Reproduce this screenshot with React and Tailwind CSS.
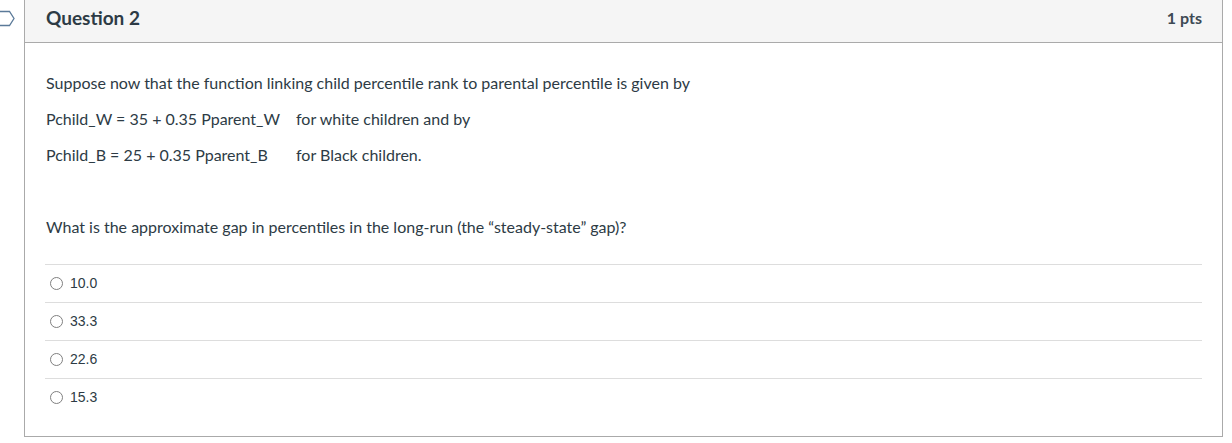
const answers = ["10.0", "33.3", "22.6", "15.3"];

function Marker() {
  return (
    <svg className="absolute left-0 top-[10px]" width="16" height="17" viewBox="0 0 16 17">
      <path d="M-4 1.5 H9.5 L14 8.5 L9.5 15.5 H-4" fill="none" stroke="#5b7a99" strokeWidth="1.3" />
    </svg>
  );
}

export default function App() {
  return (
    <div className="relative w-[1232px] h-[443px] bg-white overflow-hidden font-['Lato','Noto_Sans',sans-serif] text-[#2d3b45]">
      <Marker />
      <div className="ml-[24px] mt-[-1px] w-[1199px] border border-[#aaaaaa]">
        <div className="h-[43px] bg-[#f5f5f5] border-b border-[#aaaaaa] flex items-center justify-between pl-[21px] pr-[20px] pb-[6px]">
          <span className="text-[19px] font-bold">Question 2</span>
          <span className="text-[16px] font-bold text-[#3d4a54]">1 pts</span>
        </div>
        <div className="px-[20px] pt-[29px] pb-[20px]">
          <div className="text-[16px] leading-[22px] pl-[1px]">
            <p className="mb-[14px]">
              Suppose now that the function linking child percentile rank to parental percentile is given by
            </p>
            <p className="mb-[14px] flex">
              <span className="w-[250px]">Pchild_W = 35 + 0.35 Pparent_W</span>
              <span>for white children and by</span>
            </p>
            <p className="mb-[14px] flex">
              <span className="w-[250px]">Pchild_B = 25 + 0.35 Pparent_B</span>
              <span>for Black children.</span>
            </p>
            <p className="h-[22px] mb-[14px]"></p>
            <p className="mb-[26px]">
              What is the approximate gap in percentiles in the long-run (the “steady-state” gap)?
            </p>
          </div>
          <div>
            {answers.map((a) => (
              <div
                key={a}
                className="h-[38px] border-t border-[#dddddd] flex items-center font-['Liberation_Sans',Arial,sans-serif] text-[14px]"
              >
                <span className="ml-[5px] w-[13px] h-[13px] rounded-full border border-[#808080] bg-white" />
                <span className="ml-[7px] text-[#2d3b45]">{a}</span>
              </div>
            ))}
          </div>
        </div>
      </div>
    </div>
  );
}
